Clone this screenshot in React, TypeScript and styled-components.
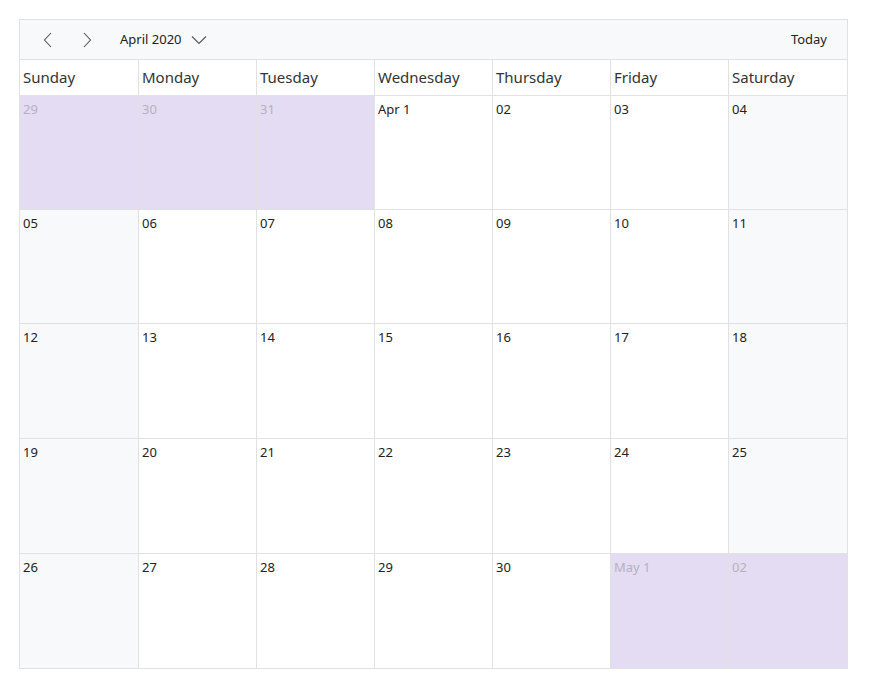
import React from "react";
import styled, { createGlobalStyle } from "styled-components";

const GlobalStyle = createGlobalStyle`
  body {
    margin: 0;
    background: #ffffff;
    font-family: "Noto Sans", "Open Sans", sans-serif;
  }
`;

const Page = styled.div`
  padding: 19px 29px 0 19px;
`;

const Calendar = styled.div`
  border: 1px solid #e1e1e1;
  width: 829px;
  box-sizing: border-box;
`;

const Toolbar = styled.div`
  height: 39px;
  background: #f8f9fa;
  border-bottom: 1px solid #e1e1e1;
  display: flex;
  align-items: center;
  padding: 0 20px 0 13px;
`;

const NavButton = styled.button`
  width: 30px;
  height: 30px;
  border: none;
  background: transparent;
  display: flex;
  align-items: center;
  justify-content: center;
  padding: 0;
  margin-right: 9px;
  cursor: pointer;
`;

const MonthLabel = styled.div`
  display: flex;
  align-items: center;
  gap: 9px;
  margin-left: 9px;
  font-size: 13px;
  color: #222;
  line-height: 1;
`;

const TodayButton = styled.button`
  margin-left: auto;
  border: none;
  background: transparent;
  font-family: inherit;
  font-size: 13px;
  color: #222;
  padding: 0;
  line-height: 1;
  cursor: pointer;
`;

const Grid = styled.div`
  display: grid;
  grid-template-columns: repeat(6, 118px) 1fr;
  grid-template-rows: 36px 114px 114px 115px 115px 114px;
`;

const DayName = styled.div<{ $first: boolean }>`
  border-left: ${(p) => (p.$first ? "none" : "1px solid #e1e1e1")};
  border-bottom: 1px solid #e1e1e1;
  font-size: 15px;
  color: #333;
  padding: 7px 0 0 3px;
  box-sizing: border-box;
`;

const Cell = styled.div<{ $first: boolean; $last: boolean; $weekend: boolean; $other: boolean }>`
  box-sizing: border-box;
  border-left: ${(p) => (p.$first ? "none" : "1px solid #e1e1e1")};
  border-bottom: ${(p) => (p.$last ? "none" : "1px solid #e1e1e1")};
  background: ${(p) => (p.$other ? "#e3dcf3" : p.$weekend ? "#f8f9fa" : "#ffffff")};
  color: ${(p) => (p.$other ? "#b6b2bd" : "#222")};
  font-size: 13px;
  padding: 4px 0 0 3px;
`;

const Icon: React.FC<{ d: string; w: number; h: number }> = ({ d, w, h }) => (
  <svg width={w} height={h} viewBox={`0 0 ${w} ${h}`} fill="none" stroke="#555" strokeWidth="1.1">
    <path d={d} />
  </svg>
);

const days = ["Sunday", "Monday", "Tuesday", "Wednesday", "Thursday", "Friday", "Saturday"];

type Day = { label: string; other: boolean };

const pad = (n: number) => (n < 10 ? `0${n}` : `${n}`);

const buildWeeks = (): Day[][] => {
  const list: Day[] = [];
  [29, 30, 31].forEach((d) => list.push({ label: pad(d), other: true }));
  for (let d = 1; d <= 30; d++) {
    list.push({ label: d === 1 ? "Apr 1" : pad(d), other: false });
  }
  list.push({ label: "May 1", other: true });
  list.push({ label: "02", other: true });
  const weeks: Day[][] = [];
  for (let i = 0; i < list.length; i += 7) weeks.push(list.slice(i, i + 7));
  return weeks;
};

const App: React.FC = () => {
  const weeks = buildWeeks();
  return (
    <Page>
      <GlobalStyle />
      <Calendar>
        <Toolbar>
          <NavButton>
            <Icon w={10} h={16} d="M8 1 L1.5 8 L8 15" />
          </NavButton>
          <NavButton>
            <Icon w={10} h={16} d="M2 1 L8.5 8 L2 15" />
          </NavButton>
          <MonthLabel>
            April 2020
            <Icon w={16} h={10} d="M1 1.5 L8 8.5 L15 1.5" />
          </MonthLabel>
          <TodayButton>Today</TodayButton>
        </Toolbar>
        <Grid>
          {days.map((d, i) => (
            <DayName key={d} $first={i === 0}>
              {d}
            </DayName>
          ))}
          {weeks.map((week, w) =>
            week.map((day, i) => (
              <Cell
                key={`${w}-${i}`}
                $first={i === 0}
                $last={w === weeks.length - 1}
                $weekend={i === 0 || i === 6}
                $other={day.other}
              >
                {day.label}
              </Cell>
            ))
          )}
        </Grid>
      </Calendar>
    </Page>
  );
};

export default App;
